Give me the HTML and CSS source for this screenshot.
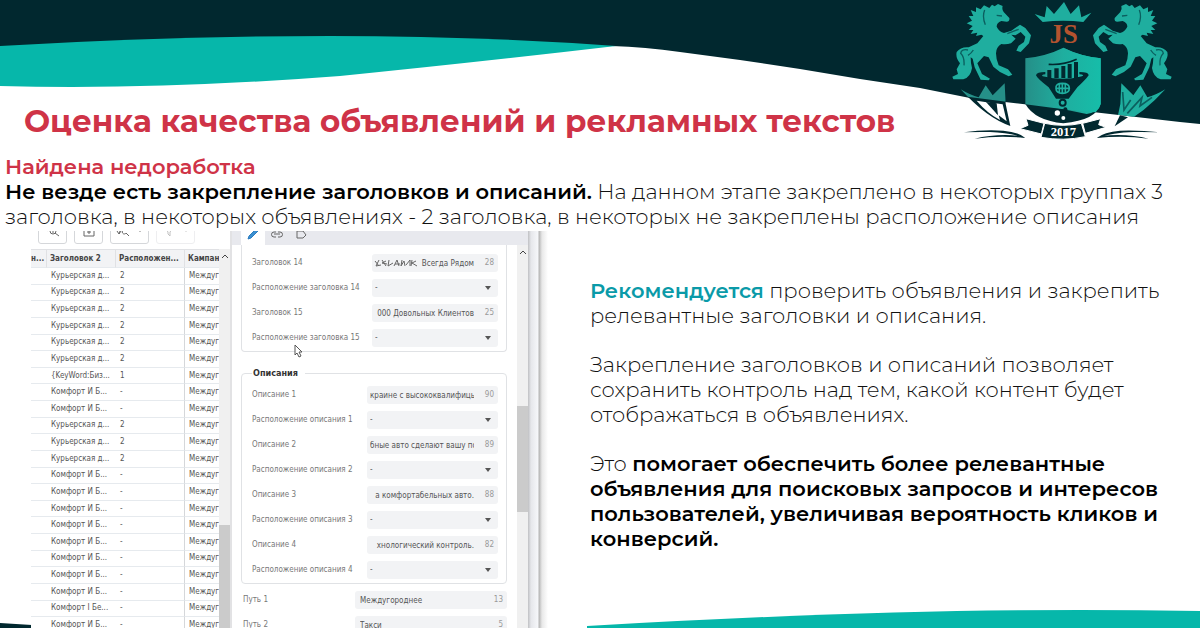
FILE: index.html
```html
<!DOCTYPE html>
<html lang="ru">
<head>
    <meta charset="UTF-8">
    <meta name="viewport" content="width=device-width, initial-scale=1.0">
    <title>Оценка качества объявлений и рекламных текстов</title>
    <link rel="stylesheet" href="styles.css">
</head>
<body>
    <div class="slide">
        <svg class="wave wave-top" viewBox="0 0 1200 130" preserveAspectRatio="none" aria-hidden="true">
            <path fill="#01282f" d="M0 0H1200V124L1180 122L970 98L920 88L860 79L800 69L740 60L680 52Q645 47 612 46L0 60Z"/>
            <path fill="#06b7aa" d="M0 46Q170 36 330 36Q480 36 616 46Q470 63 340 76Q160 90 0 86Z"/>
        </svg>
        <svg class="wave wave-bottom" viewBox="0 0 1200 20" preserveAspectRatio="none" aria-hidden="true">
            <path fill="#01282f" d="M0 15L32 17V20H0Z"/>
            <path fill="#06b7aa" d="M587 18Q860 2 1080 2Q1140 2 1200 3V20H587Z"/>
        </svg>

        <header class="header">
            <h1>Оценка качества объявлений и рекламных текстов</h1>
            <svg class="logo" viewBox="0 0 720 450" role="img" aria-label="JS 2017">
                <defs>
                    <clipPath id="above"><path d="M0 0H720V367L480 338L370 328L250 312L0 280Z"/></clipPath>
                    <linearGradient id="teal" x1="0" x2="1">
                        <stop offset="0" stop-color="#258f88"/>
                        <stop offset="0.5" stop-color="#1fae9f"/>
                        <stop offset="1" stop-color="#16bda9"/>
                    </linearGradient>
                    <g id="horse">
                        <path d="M148 24L156 14L164 19L174 12L188 18Q185 28 191 36L208 54Q210 65 200 65L184 63Q170 68 170 80Q178 96 192 99L214 92L240 74L256 84L273 106L267 130L242 156L229 152L236 137L252 126L256 110L242 96L226 106L214 104L227 116L213 130Q200 134 184 132Q168 142 168 160Q168 178 176 196L204 208L217 224L206 229L180 216L160 200L146 172L132 168L112 190L126 222L150 236L146 241L122 239L104 202L98 176L92 172Q92 190 96 204Q92 232 70 238L40 238L37 230L54 222L50 208L60 190Q46 172 50 156Q62 140 86 142L112 130L130 108L124 104L108 108L112 98L92 102L100 90L86 90L98 78L80 70L96 62L86 48L100 48L92 30L108 36L108 22L122 28L132 16Z"/>
                        <path class="ink" d="M84 150Q64 146 62 160Q74 172 72 196M100 150Q94 160 84 166M134 30Q126 50 136 74M170 46L186 48M202 101L236 88"/>
                    </g>
                    <path id="leaf" d="M62 268Q92 286 116 292L137 256L158 286L194 250L197 312L211 378Q140 354 62 268Z"/>
                </defs>
                <g fill="#01282f">
                    <use href="#leaf"/>
                    <path d="M256 175Q320 168 370 143Q420 168 482 175V312Q470 360 370 370Q285 362 256 312Z"/>
                </g>
                <path fill="#fff" d="M110 302L150 308L172 344L166 310L188 313L200 364L176 346L180 360Q142 340 110 302Z"/>
                <path fill="#01282f" d="M138 306L170 310L174 346Z"/>
                <path fill="url(#teal)" d="M370 143Q420 168 482 175V312Q476 336 440 342L370 328Z"/>
                <g clip-path="url(#above)">
                    <use href="#horse" fill="#1fae9f"/>
                    <use href="#horse" fill="#1fae9f" transform="matrix(-1 0 0 1 732 0)"/>
                    <use href="#leaf" fill="#258f88"/>
                    <use href="#leaf" fill="#1fae9f" transform="matrix(-1 0 0 1 738 0)"/>
                    <path fill="url(#teal)" d="M256 175Q320 168 370 143Q420 168 482 175V312Q475 340 440 350L370 328L256 320Z"/>
                </g>
                <path fill="none" stroke="#0b5f5f" stroke-width="5" d="M548 276L552 330L572 300M562 340L606 292L600 318L636 292"/>
                <path fill="#01282f" d="M540 346L564 352L524 379Z"/>
                <path fill="#1fae9f" d="M284 42L314 52L320 18L342 42L372 6L392 42L417 16L424 52L454 38L430 66Q370 58 308 66Z"/>
                <text class="logo-initials" x="371" y="130">JS</text>
                <g fill="#01282f">
                    <path d="M322 210h12v24h-12zM343 205h13v29h-13zM364 198h12v36h-12zM383 192h12v42h-12zM402 186h12v48h-12z"/>
                    <path d="M288 226Q290 216 316 216V223Q302 224 308 229Q370 244 426 229Q436 224 418 223V216Q446 216 446 226Q438 238 412 262L386 296H348L326 262Q292 236 288 226Z"/>
                </g>
                <path fill="none" stroke="#01282f" stroke-width="5" d="M326 193Q370 196 410 178"/>
                <path fill="none" stroke="#1fae9f" stroke-width="5" d="M367 250Q346 250 348 265Q348 280 367 280Q388 280 388 265Q388 250 367 250ZM348 265h38M358 253v24M376 253v24M367 250v30"/>
                <circle cx="368" cy="308" r="9" fill="none" stroke="#01282f" stroke-width="6"/>
                <circle cx="376" cy="328" r="6" fill="#01282f"/>
                <circle cx="352" cy="339" r="8" fill="#fff"/>
                <circle cx="370" cy="354" r="6" fill="#fff"/>
                <g fill="#01282f" stroke="#fff" stroke-width="3">
                    <path d="M258 356L312 370L304 402L240 386L264 376ZM482 356L428 370L436 400L498 382L476 374Z"/>
                    <path d="M314 370Q370 382 424 370L436 410Q370 424 303 412Z"/>
                </g>
                <text class="logo-year" x="370" y="409">2017</text>
                <path fill="#01282f" d="M72 397Q130 388 190 392Q236 396 256 414Q210 398 150 396Q110 395 72 397ZM104 416Q170 400 246 408L256 414Q180 406 104 416ZM658 397Q600 390 540 392Q492 396 470 414Q520 398 580 396Q620 395 658 397ZM626 416Q560 400 484 408L470 414Q550 406 626 416Z"/>
            </svg>
        </header>

        <section class="intro">
            <h2>Найдена недоработка</h2>
            <p><strong>Не везде есть закрепление заголовков и описаний.</strong> На данном этапе закреплено в некоторых группах 3<br>заголовка, в некоторых объявлениях - 2 заголовка, в некоторых не закреплены расположение описания</p>
        </section>

        <main class="content">
            <div class="editor">
                <div class="list-pane">
                    <div class="toolbar">
                        <button type="button" class="tool" aria-label="Поиск">
                            <svg viewBox="0 0 14 14"><circle cx="7" cy="8" r="3"/><path d="M1 8Q7 1 12 8M9 10L13 13M7 6v4"/></svg>
                        </button>
                        <button type="button" class="tool" aria-label="Сохранить">
                            <svg viewBox="0 0 14 14"><path d="M2 1H12V13H2ZM7 6V11M5 9h4"/></svg>
                        </button>
                        <button type="button" class="tool tool-wide" aria-label="Замена">
                            <svg viewBox="0 0 14 14"><path d="M1 8L3 11L5 8M3 11Q4 5 8 6M8 7a2 2 0 1 0 2 3L13 13"/></svg>
                            <svg class="caret" viewBox="0 0 6 4"><path d="M0 0H6L3 4Z"/></svg>
                        </button>
                        <button type="button" class="tool tool-wide" disabled aria-label="Отбор">
                            <svg viewBox="0 0 14 14"><path d="M3 5H11L8 9V13L6 11V9Z"/></svg>
                            <svg class="caret" viewBox="0 0 6 4"><path d="M0 0H6L3 4Z"/></svg>
                        </button>
                    </div>
                    <div class="list">
                        <table>
                            <thead>
                                <tr><th class="col-first">н...</th><th class="col-title">Заголовок 2</th><th class="col-place">Расположен...</th><th>Кампан</th></tr>
                            </thead>
                            <tbody>
                                <tr><td></td><td>Курьерская д...</td><td>2</td><td>Междуг</td></tr>
                                <tr><td></td><td>Курьерская д...</td><td>2</td><td>Междуг</td></tr>
                                <tr><td></td><td>Курьерская д...</td><td>2</td><td>Междуг</td></tr>
                                <tr><td></td><td>Курьерская д...</td><td>2</td><td>Междуг</td></tr>
                                <tr><td></td><td>Курьерская д...</td><td>2</td><td>Междуг</td></tr>
                                <tr><td></td><td>Курьерская д...</td><td>2</td><td>Междуг</td></tr>
                                <tr><td></td><td>{KeyWord:Биз...</td><td>1</td><td>Междуг</td></tr>
                                <tr><td></td><td>Комфорт И Б...</td><td>-</td><td>Междуг</td></tr>
                                <tr><td></td><td>Комфорт И Б...</td><td>-</td><td>Междуг</td></tr>
                                <tr><td></td><td>Курьерская д...</td><td>2</td><td>Междуг</td></tr>
                                <tr><td></td><td>Курьерская д...</td><td>2</td><td>Междуг</td></tr>
                                <tr><td></td><td>Курьерская д...</td><td>2</td><td>Междуг</td></tr>
                                <tr><td></td><td>Комфорт И Б...</td><td>-</td><td>Междуг</td></tr>
                                <tr><td></td><td>Комфорт И Б...</td><td>-</td><td>Междуг</td></tr>
                                <tr><td></td><td>Комфорт И Б...</td><td>-</td><td>Междуг</td></tr>
                                <tr><td></td><td>Комфорт И Б...</td><td>-</td><td>Междуг</td></tr>
                                <tr><td></td><td>Комфорт И Б...</td><td>-</td><td>Междуг</td></tr>
                                <tr><td></td><td>Комфорт И Б...</td><td>-</td><td>Междуг</td></tr>
                                <tr><td></td><td>Комфорт И Б...</td><td>-</td><td>Междуг</td></tr>
                                <tr><td></td><td>Комфорт И Б...</td><td>-</td><td>Междуг</td></tr>
                                <tr><td></td><td>Комфорт I Бе...</td><td>-</td><td>Междуг</td></tr>
                                <tr><td></td><td>Комфорт И Б...</td><td>-</td><td>Междуг</td></tr>
                            </tbody>
                        </table>
                        <div class="scrollbar">
                            <svg viewBox="0 0 8 5"><path d="M1 4L4 1L7 4"/></svg>
                            <div class="thumb thumb-list"></div>
                        </div>
                    </div>
                </div>

                <div class="detail-pane">
                    <div class="tabs">
                        <button type="button" class="tab active" aria-label="Правка">
                            <svg viewBox="0 0 14 14"><path fill="#3b8fd0" stroke="#2a7cc0" d="M2 12L3 9L10 2L12 4L5 11Z"/></svg>
                        </button>
                        <button type="button" class="tab" aria-label="Ссылки">
                            <svg viewBox="0 0 14 14"><path d="M6 5H4a2 2 0 0 0 0 5H6M8 5h2a2 2 0 0 1 0 5H8M4 7h6"/></svg>
                        </button>
                        <button type="button" class="tab" aria-label="Метки">
                            <svg viewBox="0 0 14 14"><path d="M3 4H9L12 8L9 11H3Z"/></svg>
                        </button>
                    </div>
                    <div class="detail-body">
                        <form class="form">
                            <fieldset class="group group-titles">
                                <div class="row"><label for="t14">Заголовок 14</label>
                                    <div class="field"><svg class="scribble" viewBox="0 0 44 10" aria-hidden="true"><path d="M1 3L5 8M5 2L2 8L7 7M8 2L12 8M12 3L8 5L13 6M15 2L14 8L19 5M20 8L23 2L25 8M21 6h5M28 2L27 8L30 3L31 8M32 7L36 2L36 8M38 2L37 8M42 3L38 5L43 8"/></svg><input id="t14" value="Всегда Рядом"><span class="count">28</span></div></div>
                                <div class="row"><label for="p14">Расположение заголовка 14</label>
                                    <div class="field"><select id="p14"><option>-</option></select><svg class="caret" viewBox="0 0 6 4"><path d="M0 0H6L3 4Z"/></svg></div></div>
                                <div class="row"><label for="t15">Заголовок 15</label>
                                    <div class="field"><input id="t15" value="000 Довольных Клиентов"><span class="count">25</span></div></div>
                                <div class="row"><label for="p15">Расположение заголовка 15</label>
                                    <div class="field"><select id="p15"><option>-</option></select><svg class="caret" viewBox="0 0 6 4"><path d="M0 0H6L3 4Z"/></svg></div></div>
                            </fieldset>

                            <fieldset class="group group-texts">
                                <legend>Описания</legend>
                                <div class="row"><label for="d1">Описание 1</label>
                                    <div class="field"><input id="d1" value="краине с высококвалифиць"><span class="count">90</span></div></div>
                                <div class="row"><label for="dp1">Расположение описания 1</label>
                                    <div class="field"><select id="dp1"><option>-</option></select><svg class="caret" viewBox="0 0 6 4"><path d="M0 0H6L3 4Z"/></svg></div></div>
                                <div class="row"><label for="d2">Описание 2</label>
                                    <div class="field"><input id="d2" value="бные авто сделают вашу по"><span class="count">89</span></div></div>
                                <div class="row"><label for="dp2">Расположение описания 2</label>
                                    <div class="field"><select id="dp2"><option>-</option></select><svg class="caret" viewBox="0 0 6 4"><path d="M0 0H6L3 4Z"/></svg></div></div>
                                <div class="row"><label for="d3">Описание 3</label>
                                    <div class="field"><input id="d3" value="а комфортабельных авто."><span class="count">88</span></div></div>
                                <div class="row"><label for="dp3">Расположение описания 3</label>
                                    <div class="field"><select id="dp3"><option>-</option></select><svg class="caret" viewBox="0 0 6 4"><path d="M0 0H6L3 4Z"/></svg></div></div>
                                <div class="row"><label for="d4">Описание 4</label>
                                    <div class="field"><input id="d4" value="хнологический контроль."><span class="count">82</span></div></div>
                                <div class="row"><label for="dp4">Расположение описания 4</label>
                                    <div class="field"><select id="dp4"><option>-</option></select><svg class="caret" viewBox="0 0 6 4"><path d="M0 0H6L3 4Z"/></svg></div></div>
                            </fieldset>

                            <div class="paths">
                                <div class="row"><label for="path1">Путь 1</label>
                                    <div class="field"><input id="path1" value="Междугороднее"><span class="count">13</span></div></div>
                                <div class="row"><label for="path2">Путь 2</label>
                                    <div class="field"><input id="path2" value="Такси"><span class="count">5</span></div></div>
                            </div>
                        </form>
                        <div class="scrollbar">
                            <svg viewBox="0 0 8 5"><path d="M1 4L4 1L7 4"/></svg>
                            <div class="thumb thumb-form"></div>
                        </div>
                    </div>
                    <svg class="cursor" viewBox="0 0 9 14" aria-hidden="true"><path d="M1 1V11L3 9L5 13L7 12L5 8H8Z"/></svg>
                </div>
                <div class="window-edge"></div>
            </div>

            <article class="advice">
                <p><strong class="accent">Рекомендуется</strong> проверить объявления и закрепить<br>релевантные заголовки и описания.</p>
                <p>Закрепление заголовков и описаний позволяет<br>сохранить контроль над тем, какой контент будет<br>отображаться в объявлениях.</p>
                <p>Это <strong>помогает обеспечить более релевантные<br>объявления для поисковых запросов и интересов<br>пользователей, увеличивая вероятность кликов и<br>конверсий.</strong></p>
            </article>
        </main>
    </div>
</body>
</html>
```
FILE: styles.css
```css
* {
    margin: 0;
    padding: 0;
    box-sizing: border-box;
}

body {
    font-family: Montserrat, Inter, sans-serif;
    font-size: 21px;
    line-height: 25px;
    font-weight: 300;
    color: #111;
    background: #fff;
}

.slide {
    position: relative;
    display: flex;
    flex-direction: column;
    height: 100vh;
    overflow: hidden;
}

/* Background waves */
.wave {
    position: absolute;
    left: 0;
    width: 100%;
}

.wave-top {
    top: 0;
    height: 130px;
}

.wave-bottom {
    bottom: 0;
    height: 20px;
}

/* Header */
.header {
    position: relative;
    display: flex;
    justify-content: space-between;
    align-items: flex-end;
    padding: 0 20px 0 24px;
}

.header h1 {
    font-size: 31px;
    line-height: 40px;
    font-weight: 700;
    color: #cf3347;
    padding-bottom: 9px;
    white-space: nowrap;
}

.logo {
    width: 240px;
    height: 150px;
    flex: none;
}

.logo .ink {
    fill: none;
    stroke: #0b5f5f;
    stroke-width: 4;
}

.logo-initials {
    font: bold 80px "Liberation Serif", serif;
    fill: #b4532f;
    text-anchor: middle;
}

.logo-year {
    font: bold 38px "Liberation Serif", serif;
    fill: #fff;
    text-anchor: middle;
}

/* Intro */
.intro {
    position: relative;
    padding: 4px 5px 2px;
    white-space: nowrap;
}

.intro h2 {
    font-size: 21px;
    line-height: 25px;
    font-weight: 600;
    color: #cf3347;
}

strong {
    font-weight: 600;
    color: #000;
}

/* Content */
.content {
    position: relative;
    display: flex;
    flex: 1;
    min-height: 0;
    gap: 39px;
    padding-left: 31px;
}

.advice {
    flex: 1;
    display: flex;
    flex-direction: column;
    gap: 24px;
    padding-top: 47px;
    white-space: nowrap;
}

.advice .accent {
    color: #0a9aa8;
}

/* Editor window */
.editor {
    display: flex;
    flex: none;
    width: 520px;
    overflow: hidden;
    background: #fff;
    font-family: "DejaVu Sans Condensed", "Noto Sans", sans-serif;
    font-size: 8px;
    line-height: 12px;
    font-weight: 400;
    color: #555;
}

.editor svg {
    fill: none;
    stroke: #666;
}

.editor .caret {
    width: 6px;
    height: 4px;
    fill: #555;
    stroke: none;
}

.list-pane {
    width: 201px;
    display: flex;
    flex-direction: column;
    border-right: 2px solid #e2e2e4;
}

.toolbar {
    display: flex;
    align-items: flex-end;
    gap: 7px;
    height: 13px;
    margin-bottom: 5px;
    padding-left: 7px;
    overflow: hidden;
    flex: none;
}

.tool {
    display: flex;
    align-items: center;
    justify-content: center;
    gap: 7px;
    width: 29px;
    height: 28px;
    flex: none;
    background: #fff;
    border: 1px solid #d5d7da;
    border-radius: 3px;
}

.tool svg {
    width: 14px;
    height: 14px;
    flex: none;
}

.tool-wide {
    width: 39px;
}

.tool:disabled {
    opacity: 0.4;
}

.list {
    display: flex;
    flex: none;
}

table {
    width: 188px;
    height: 385px;
    table-layout: fixed;
    border-collapse: separate;
    border-spacing: 0;
}

th,
td {
    overflow: hidden;
    white-space: nowrap;
    text-align: left;
    padding-left: 4px;
    border-bottom: 1px solid #e6eaee;
}

th {
    height: 19px;
    padding-left: 3px;
    font-weight: 700;
    color: #444;
    background: #f2f3f5;
    border-top: 1px solid #e0e1e4;
    border-right: 1px solid #e0e1e4;
}

th:first-child {
    padding-left: 0;
}

th:last-child {
    border-right: 0;
}

td:nth-child(3) {
    border-right: 1px solid #d5d7da;
}

.col-first {
    width: 16px;
}

.col-title,
.col-place {
    width: 69px;
}

.scrollbar {
    width: 11px;
    display: flex;
    flex-direction: column;
    align-items: center;
    background: #f0f0f0;
}

.scrollbar svg {
    width: 8px;
    height: 5px;
    margin-top: 5px;
    flex: none;
    stroke: #444;
}

.thumb {
    width: 100%;
    background: #cbcbcb;
}

.thumb-list {
    flex: 1;
    margin-top: 266px;
}

.thumb-form {
    height: 106px;
    margin-top: 151px;
}

/* Details */
.detail-pane {
    position: relative;
    display: flex;
    flex-direction: column;
    width: 296px;
}

.tabs {
    display: flex;
    height: 14px;
    flex: none;
    overflow: hidden;
    background: #e8e9ee;
    padding-left: 9px;
}

.tab {
    display: flex;
    justify-content: center;
    align-items: flex-start;
    width: 24px;
    background: none;
    border: 0;
}

.tab.active {
    background: #fff;
}

.tab svg {
    width: 14px;
    height: 14px;
    margin-top: -4px;
    flex: none;
}

.detail-body {
    display: flex;
    flex: 1;
    min-height: 0;
    overflow: hidden;
}

.form {
    flex: 1;
    padding: 0 10px 0 9px;
}

.group {
    border: 1px solid #e0e2e5;
    border-radius: 4px;
    padding: 0 8px 4px 10px;
}

.group-titles {
    border-top: 0;
    border-radius: 0 0 4px 4px;
    padding-top: 9px;
}

.group-texts {
    margin-top: 14px;
    padding-top: 6px;
}

legend {
    padding: 0 7px 0 1px;
    font-size: 9px;
    line-height: 14px;
    font-weight: 700;
    color: #333;
}

.row {
    display: flex;
    justify-content: space-between;
    align-items: center;
    height: 18px;
    color: #777;
}

.row + .row {
    margin-top: 7px;
}

.row label {
    white-space: nowrap;
}

.field {
    position: relative;
    display: flex;
    align-items: center;
    width: 131px;
    height: 18px;
    padding: 0 4px 0 3px;
    background: #f2f3f5;
    border-radius: 3px;
}

.group-titles .field {
    width: 126px;
}

.paths {
    margin-top: 7px;
}

.paths .row {
    padding-left: 2px;
}

.paths .field {
    width: 152px;
    padding-left: 5px;
}

.field input,
.field select {
    flex: 1;
    min-width: 0;
    height: 18px;
    border: 0;
    outline: 0;
    appearance: none;
    background: none;
    font: inherit;
    color: #555;
}

.group .field input {
    text-align: right;
}

.field .caret {
    margin-right: 3px;
}

.count {
    width: 20px;
    text-align: right;
    color: #999;
}

.scribble {
    position: absolute;
    left: 2px;
    top: 4px;
    width: 44px;
    height: 10px;
}

.cursor {
    position: absolute;
    left: 62px;
    top: 113px;
    width: 9px;
    height: 14px;
}

.editor .cursor {
    fill: #fff;
    stroke: #555;
}

.window-edge {
    flex: 1;
    background: linear-gradient(90deg, #bfc0c3 0, #e6e7eb 3px, #f6f7fa 10px, #b5b5b5 11px, #e8e8e8 14px, #fff 20px);
}
```
